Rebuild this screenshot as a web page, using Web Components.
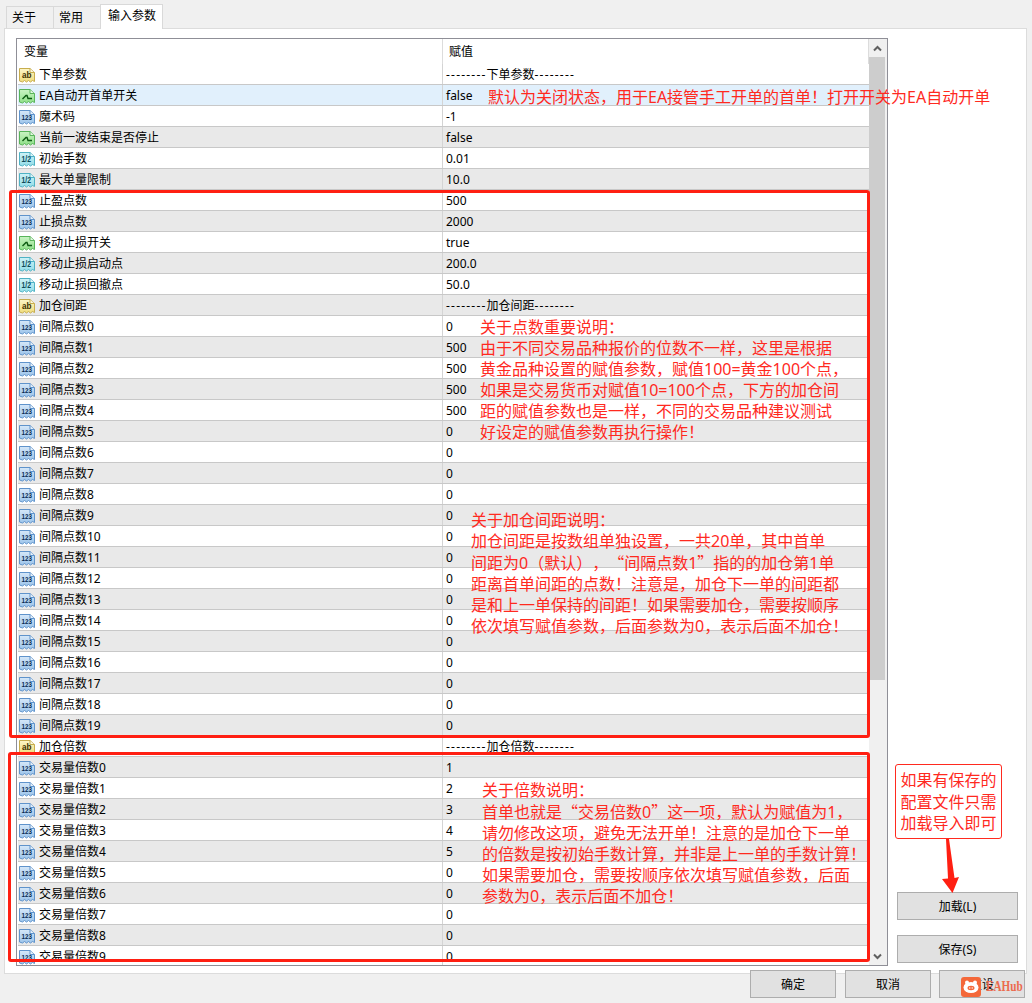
<!DOCTYPE html>
<html>
<head>
<meta charset="utf-8">
<style>
  html, body { margin: 0; padding: 0; background: #f0f0f0; }
  body { font: 12px "Noto Sans", "Noto Sans CJK SC", sans-serif; color: #000; }
</style>
</head>
<body>
<ea-dialog>
  <ea-tab slot="tabs">关于</ea-tab>
  <ea-tab slot="tabs">常用</ea-tab>
  <ea-tab slot="tabs" active>输入参数</ea-tab>

  <param-list slot="list"></param-list>

  <ea-button slot="side" wide>加载(L)</ea-button>
  <ea-button slot="side" wide>保存(S)</ea-button>

  <ea-button slot="footer">确定</ea-button>
  <ea-button slot="footer">取消</ea-button>
  <ea-button slot="footer" tight>重设</ea-button>

  <red-frame slot="overlay" x="9" y="190" w="861" h="548"></red-frame>
  <red-frame slot="overlay" x="8" y="752" w="862" h="210"></red-frame>

  <red-note slot="overlay" x="488" y="87">默认为关闭状态，用于EA接管手工开单的首单！打开开关为EA自动开单</red-note>
  <red-note slot="overlay" x="480" y="317">关于点数重要说明：
由于不同交易品种报价的位数不一样，这里是根据
黄金品种设置的赋值参数，赋值100=黄金100个点，
如果是交易货币对赋值10=100个点，下方的加仓间
距的赋值参数也是一样，不同的交易品种建议测试
好设定的赋值参数再执行操作！</red-note>
  <red-note slot="overlay" x="471" y="510">关于加仓间距说明：
加仓间距是按数组单独设置，一共20单，其中首单
间距为0（默认），<i>“</i>间隔点数1<i>”</i>指的的加仓第1单
距离首单间距的点数！注意是，加仓下一单的间距都
是和上一单保持的间距！如果需要加仓，需要按顺序
依次填写赋值参数，后面参数为0，表示后面不加仓！</red-note>
  <red-note slot="overlay" x="482" y="780">关于倍数说明：
首单也就是<i>“</i>交易倍数0<i>”</i>这一项，默认为赋值为1，
请勿修改这项，避免无法开单！注意的是加仓下一单
的倍数是按初始手数计算，并非是上一单的手数计算！
如果需要加仓，需要按顺序依次填写赋值参数，后面
参数为0，表示后面不加仓！</red-note>

  <load-callout slot="overlay"></load-callout>
  <ea-logo slot="overlay"></ea-logo>
</ea-dialog>

<script>
  // Small type icons of the parameter list
  const ICON_COLORS = {
    ab:   { top: '#fdf6c8', fill: '#efdc7c', line: '#c7ad4e', text: '#3c3000', label: 'ab', size: 9.5, len: 9.5, x: 3 },
    int:  { top: '#d6e8f9', fill: '#9cc4ea', line: '#5f93cb', text: '#082c52', label: '123', size: 8, len: 10.5, x: 2.5 },
    bool: { top: '#c9f3c3', fill: '#8fe088', line: '#58b45a', text: '#0d5a12', label: '' },
    dbl:  { top: '#cdf2f7', fill: '#94dde8', line: '#4fb2c4', text: '#0b4a58', label: '1/2', size: 9, len: 9.5, x: 2.5 }
  };

  class TypeIcon extends HTMLElement {
    connectedCallback() {
      const c = ICON_COLORS[this.getAttribute('kind')] || ICON_COLORS.int;
      const inner = c.label
        ? `<text x="${c.x}" y="11" textLength="${c.len}" lengthAdjust="spacingAndGlyphs" font-family="'Liberation Sans', sans-serif" font-weight="700" font-size="${c.size}" fill="${c.text}">${c.label}</text>`
        : `<path d="M3.5 11 L7 7.5 H8 L9 10.5 H13" fill="none" stroke="${c.text}" stroke-width="1.4"/>`;
      this.attachShadow({ mode: 'open' }).innerHTML = `
        <style>
          :host { display: block; width: 16px; height: 16px; flex: none; margin-top: 3px; }
          svg { display: block; }
        </style>
        <svg width="16" height="16" viewBox="0 0 16 16">
          <defs>
            <linearGradient id="g" x1="0" y1="0" x2="0" y2="1">
              <stop offset="0" stop-color="${c.top}"/>
              <stop offset="1" stop-color="${c.fill}"/>
            </linearGradient>
          </defs>
          <path d="M.5 1.5 H11 L15.5 5.5 V14.5 L13.5 13.5 L11.5 15 L9.5 13.5 L7.5 15 L5.5 13.5 L3.5 15 L.5 14 Z"
                fill="url(#g)" stroke="${c.line}"/>
          <path d="M11 1.5 V5.5 H15.5" fill="#fff" fill-opacity=".6" stroke="${c.line}"/>
          ${inner}
        </svg>`;
    }
  }
  customElements.define('type-icon', TypeIcon);

  class ParamRow extends HTMLElement {
    connectedCallback() {
      const kind = this.getAttribute('kind');
      const name = this.getAttribute('name');
      // group rows show their name between two runs of dashes
      const dash = '<span class="dash">--------</span>';
      const value = kind === 'ab' ? dash + name + dash : this.getAttribute('value');
      this.attachShadow({ mode: 'open' }).innerHTML = `
        <style>
          :host {
            display: grid;
            grid-template-columns: 424px 1fr;
            height: 21px;
            box-sizing: border-box;
            border-bottom: 1px solid #c8c8c8;
            background: #fff;
            line-height: 22px;
            white-space: nowrap;
          }
          :host([shade]) { background: #e9e9e9; }
          :host([selected]) { background: #e1f0fc; }
          .name { display: flex; align-items: flex-start; gap: 4px; padding-left: 1px; height: 20px; }
          .value { border-left: 1px solid #d4d4d4; padding-left: 3px; height: 20px; }
          .dash { letter-spacing: 1.2px; }
        </style>
        <div class="name">
          <type-icon kind="${kind}"></type-icon>
          <span>${name}</span>
        </div>
        <div class="value">${value}</div>`;
    }
  }
  customElements.define('param-row', ParamRow);

  class ParamList extends HTMLElement {
    constructor() {
      super();
      const rows = [
        ['ab', '下单参数', ''],
        ['bool', 'EA自动开首单开关', 'false'],
        ['int', '魔术码', '-1'],
        ['bool', '当前一波结束是否停止', 'false'],
        ['dbl', '初始手数', '0.01'],
        ['dbl', '最大单量限制', '10.0'],
        ['int', '止盈点数', '500'],
        ['int', '止损点数', '2000'],
        ['bool', '移动止损开关', 'true'],
        ['dbl', '移动止损启动点', '200.0'],
        ['dbl', '移动止损回撤点', '50.0'],
        ['ab', '加仓间距', '']
      ];
      const gaps = [0, 500, 500, 500, 500];
      for (let i = 0; i < 20; i++) rows.push(['int', '间隔点数' + i, gaps[i] || 0]);
      rows.push(['ab', '加仓倍数', '']);
      const mult = [1, 2, 3, 4, 5];
      for (let i = 0; i < 10; i++) rows.push(['int', '交易量倍数' + i, mult[i] || 0]);

      const html = rows.map((r, i) =>
        `<param-row kind="${r[0]}" name="${r[1]}" value="${r[2]}"
          ${i === 1 ? 'selected' : ''} ${i % 2 ? 'shade' : ''}></param-row>`).join('');

      this.attachShadow({ mode: 'open' }).innerHTML = `
        <style>
          :host {
            display: flex;
            width: 872px;
            height: 928px;
            box-sizing: border-box;
            border: 1px solid #8f8f97;
            background: #fff;
          }
          .main { width: 851px; margin-left: 1px; overflow: hidden; }
          .head {
            display: grid;
            grid-template-columns: 424px 1fr;
            height: 25px;
            line-height: 25px;
            border-right: 1px solid #dcdcdc;
            box-sizing: border-box;
          }
          .head div { padding-left: 6px; }
          .head div + div { border-left: 1px solid #dcdcdc; }
          .bar {
            width: 18px;
            background: #f0f0f0;
            display: flex;
            flex-direction: column;
            padding-right: 2px;
            box-sizing: border-box;
          }
          .arrow { height: 18px; display: flex; align-items: center; justify-content: center; flex: none; }
          .thumb { height: 623px; background: #cdcdcd; flex: none; }
          .track { flex: 1; }
        </style>
        <div class="main">
          <div class="head"><div>变量</div><div>赋值</div></div>
          ${html}
        </div>
        <div class="bar">
          <div class="arrow"><svg width="9" height="7"><path d="M1 5.5 L4.5 2 L8 5.5" fill="none" stroke="#606060" stroke-width="2"/></svg></div>
          <div class="thumb"></div>
          <div class="track"></div>
          <div class="arrow"><svg width="9" height="7"><path d="M1 1.5 L4.5 5 L8 1.5" fill="none" stroke="#606060" stroke-width="2"/></svg></div>
        </div>`;
    }
  }
  customElements.define('param-list', ParamList);

  class EaTab extends HTMLElement {
    constructor() {
      super();
      this.attachShadow({ mode: 'open' }).innerHTML = `
        <style>
          :host {
            display: block;
            height: 22px;
            line-height: 21px;
            margin-top: 2px;
            padding: 0 5px;
            box-sizing: border-box;
            width: 48px;
            background: #f0f0f0;
            border: 1px solid #d9d9d9;
            border-bottom: 0;
            margin-right: -1px;
            white-space: nowrap;
          }
          :host([active]) {
            width: 63px;
            height: 25px;
            margin-top: 0;
            margin-right: 0;
            background: #fff;
            padding: 0 7px;
            position: relative;
            z-index: 1;
          }
        </style>
        <slot></slot>`;
    }
  }
  customElements.define('ea-tab', EaTab);

  class EaButton extends HTMLElement {
    constructor() {
      super();
      this.attachShadow({ mode: 'open' }).innerHTML = `
        <style>
          :host {
            display: flex;
            align-items: center;
            justify-content: center;
            width: 86px;
            height: 28px;
            box-sizing: border-box;
            background: #e1e1e1;
            border: 1px solid #adadad;
          }
          :host([wide]) { width: 121px; }
          :host([tight]) { margin-left: -1px; }
        </style>
        <slot></slot>`;
    }
  }
  customElements.define('ea-button', EaButton);

  class RedFrame extends HTMLElement {
    connectedCallback() {
      const a = n => this.getAttribute(n) + 'px';
      this.attachShadow({ mode: 'open' }).innerHTML = `
        <style>
          :host {
            position: absolute;
            left: ${a('x')}; top: ${a('y')}; width: ${a('w')}; height: ${a('h')};
            box-sizing: border-box;
            border: 3px solid #ff1f12;
            border-radius: 3px;
            pointer-events: none;
          }
        </style>`;
    }
  }
  customElements.define('red-frame', RedFrame);

  class RedNote extends HTMLElement {
    connectedCallback() {
      this.attachShadow({ mode: 'open' }).innerHTML = `
        <style>
          :host {
            position: absolute;
            left: ${this.getAttribute('x')}px;
            top: ${this.getAttribute('y')}px;
            font: 16px/21px "Noto Sans", "Noto Sans CJK SC", sans-serif;
            color: #ff2a1f;
            text-spacing-trim: space-all;
          }
          slot { display: block; white-space: pre; }
          ::slotted(i) { font-style: normal; font-family: "Noto Sans CJK SC", sans-serif; }
        </style>
        <slot></slot>`;
    }
  }
  customElements.define('red-note', RedNote);

  class LoadCallout extends HTMLElement {
    constructor() {
      super();
      this.attachShadow({ mode: 'open' }).innerHTML = `
        <style>
          :host { position: absolute; left: 895px; top: 764px; width: 107px; height: 130px; }
          .box {
            box-sizing: border-box;
            height: 75px;
            background: #fff;
            border: 1px solid #ff2a1f;
            border-radius: 3px;
            color: #ff2a1f;
            font: 16px/21.5px "Noto Sans", "Noto Sans CJK SC", sans-serif;
            text-align: center;
            padding-top: 5px;
          }
          svg { position: absolute; left: 0; top: 0; }
        </style>
        <div class="box">如果有保存的<br>配置文件只需<br>加载导入即可</div>
        <svg width="107" height="130">
          <path d="M51 75 L54 75 L59.5 114 L64 113 L57.5 129 L47 115 L53 114.5 Z" fill="#ff1f12"/>
        </svg>`;
    }
  }
  customElements.define('load-callout', LoadCallout);

  class EaLogo extends HTMLElement {
    constructor() {
      super();
      this.attachShadow({ mode: 'open' }).innerHTML = `
        <style>
          :host {
            position: absolute;
            left: 961px; top: 977px;
            width: 65px;
            display: flex;
            align-items: center;
            gap: 5px;
          }
          b {
            font: bold 14px "Liberation Serif", serif;
            color: #ec6a4e;
            transform: scaleX(.8);
            transform-origin: left center;
          }
          svg { display: block; flex: none; }
        </style>
        <svg width="20" height="20" viewBox="0 0 20 20">
          <rect width="20" height="20" rx="3" fill="#f4683a"/>
          <circle cx="6" cy="5.5" r="2" fill="#fff"/>
          <circle cx="14" cy="5.5" r="2" fill="#fff"/>
          <ellipse cx="10" cy="10.5" rx="7.5" ry="5.5" fill="#fff"/>
          <ellipse cx="10" cy="11" rx="3.5" ry="2.2" fill="#f4683a"/>
          <circle cx="8.8" cy="11" r=".7" fill="#fff"/>
          <circle cx="11.2" cy="11" r=".7" fill="#fff"/>
        </svg>
        <b>EAHub</b>`;
    }
  }
  customElements.define('ea-logo', EaLogo);

  class EaDialog extends HTMLElement {
    constructor() {
      super();
      this.attachShadow({ mode: 'open' }).innerHTML = `
        <style>
          :host {
            display: block;
            position: relative;
            width: 1032px;
            height: 1003px;
            overflow: hidden;
            background: #f0f0f0;
          }
          .tabs {
            display: flex;
            padding: 4px 0 0 6px;
            height: 24px;
          }
          .panel {
            display: flex;
            box-sizing: border-box;
            width: 1023px;
            height: 946px;
            margin-left: 4px;
            padding: 9px 0 7px 11px;
            background: #fff;
            border: 1px solid #dcdcdc;
          }
          .side {
            display: flex;
            flex-direction: column;
            justify-content: flex-end;
            gap: 15px;
            margin-left: 9px;
            padding-bottom: 3px;
          }
          .footer {
            display: flex;
            justify-content: flex-end;
            gap: 9px;
            margin-top: -4px;
            padding-right: 7px;
          }
        </style>
        <div class="tabs"><slot name="tabs"></slot></div>
        <div class="panel">
          <slot name="list"></slot>
          <div class="side"><slot name="side"></slot></div>
        </div>
        <div class="footer"><slot name="footer"></slot></div>
        <slot name="overlay"></slot>`;
    }
  }
  customElements.define('ea-dialog', EaDialog);
</script>
</body>
</html>
